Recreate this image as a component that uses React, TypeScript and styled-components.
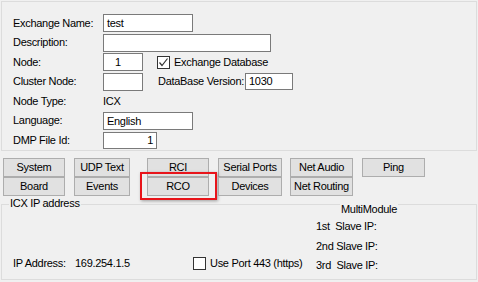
import React from 'react';
import styled, { createGlobalStyle } from 'styled-components';

const GlobalStyle = createGlobalStyle`
  html, body {
    margin: 0;
    padding: 0;
    background: #f0f0f0;
  }
  body {
    font-family: "Liberation Sans", Arial, sans-serif;
    font-size: 11px;
    letter-spacing: -0.3px;
    color: #000;
  }
`;

const Window = styled.div`
  width: 478px;
  height: 282px;
  box-sizing: border-box;
  padding: 1px 1px 0 1px;
  background: #f0f0f0;
  display: flex;
  flex-direction: column;
`;

const Panel = styled.div`
  border: 1px solid #dcdcdc;
  width: 476px;
  box-sizing: border-box;
  padding: 12px 0 1px 11px;
  display: grid;
  row-gap: 1.5px;
`;

const Row = styled.div`
  display: flex;
  align-items: center;
  height: 18px;
`;

const Label = styled.span<{ $w?: number }>`
  width: ${(p) => p.$w ?? 90}px;
  flex: none;
  line-height: 13px;
  white-space: nowrap;
`;

const Input = styled.div<{ $w: number; $right?: boolean; $h?: number; $pl?: number }>`
  width: ${(p) => p.$w}px;
  height: ${(p) => p.$h ?? 18}px;
  box-sizing: border-box;
  border: 1px solid #7a7a7a;
  background: #fff;
  padding: 0 3px 0 ${(p) => p.$pl ?? 3}px;
  line-height: ${(p) => (p.$h ?? 18) - 2}px;
  text-align: ${(p) => (p.$right ? 'right' : 'left')};
  flex: none;
`;

const CheckWrap = styled.label<{ $ml: number }>`
  display: flex;
  align-items: center;
  gap: 4px;
  margin-left: ${(p) => p.$ml}px;
  line-height: 13px;
  white-space: nowrap;
`;

const Box = styled.span`
  width: 13px;
  height: 13px;
  box-sizing: border-box;
  border: 1px solid #333;
  background: #fff;
  display: inline-flex;
  align-items: center;
  justify-content: center;
  flex: none;
`;

const Spaced = styled.span<{ $ml: number }>`
  margin-left: ${(p) => p.$ml}px;
  margin-right: 1px;
  line-height: 13px;
  white-space: nowrap;
`;

const Buttons = styled.div`
  display: grid;
  grid-template-columns: 71px 73px 71px 72px 72px 63px;
  grid-auto-rows: 19px;
  margin: 7px 0 0 2px;
`;

const Cell = styled.div<{ $marked?: boolean }>`
  position: relative;
  ${(p) =>
    p.$marked &&
    `
    &::after {
      content: '';
      position: absolute;
      left: -7px;
      top: -5px;
      right: 1px;
      bottom: -4px;
      border: 2px solid #e8141a;
      box-shadow: 1px 1px 3px rgba(0, 0, 0, 0.35);
      pointer-events: none;
    }
  `}
`;

const Button = styled.button<{ $w: number }>`
  width: ${(p) => p.$w}px;
  height: 19px;
  box-sizing: border-box;
  border: 1px solid #adadad;
  background: #e1e1e1;
  font: inherit;
  letter-spacing: inherit;
  color: #000;
  padding: 0;
  line-height: 17px;
  text-align: center;
`;

const Group = styled.div`
  position: relative;
  margin-top: 8px;
  width: 476px;
  height: 76px;
  box-sizing: border-box;
  border: 1px solid #dcdcdc;
  display: flex;
`;

const Legend = styled.span<{ $left: number; $top: number }>`
  position: absolute;
  left: ${(p) => p.$left}px;
  top: ${(p) => p.$top}px;
  background: #f0f0f0;
  line-height: 13px;
  padding: 0 1px;
  white-space: nowrap;
`;

const IpPart = styled.div`
  width: 314px;
  flex: none;
  box-sizing: border-box;
  padding: 0 0 9px 11px;
  align-self: flex-end;
  display: flex;
  align-items: center;
  line-height: 13px;
`;

const SlaveList = styled.div`
  display: flex;
  flex-direction: column;
  gap: 6.5px;
  padding-top: 15px;
  line-height: 13px;
  white-space: pre;
`;

const Check = () => (
  <svg width="11" height="11" viewBox="0 0 11 11">
    <polyline points="1.5,5.5 4,8.5 9.5,1.5" fill="none" stroke="#333" strokeWidth="1.2" />
  </svg>
);

const rowOne = [
  { t: 'System', w: 62 },
  { t: 'UDP Text', w: 56 },
  { t: 'RCI', w: 62 },
  { t: 'Serial Ports', w: 64 },
  { t: 'Net Audio', w: 63 },
  { t: 'Ping', w: 63 },
];

const rowTwo = [
  { t: 'Board', w: 62 },
  { t: 'Events', w: 56 },
  { t: 'RCO', w: 62, marked: true },
  { t: 'Devices', w: 64 },
  { t: 'Net Routing', w: 63 },
];

export default function App() {
  return (
    <>
      <GlobalStyle />
      <Window>
        <Panel>
          <Row>
            <Label>Exchange Name:</Label>
            <Input $w={90}>test</Input>
          </Row>
          <Row>
            <Label>Description:</Label>
            <Input $w={168} />
          </Row>
          <Row>
            <Label>Node:</Label>
            <Input $w={40} $pl={11}>1</Input>
            <CheckWrap $ml={14}>
              <Box>
                <Check />
              </Box>
              Exchange Database
            </CheckWrap>
          </Row>
          <Row>
            <Label>Cluster Node:</Label>
            <Input $w={40} />
            <Spaced $ml={15}>DataBase Version:</Spaced>
            <Input $w={48} $h={17}>1030</Input>
          </Row>
          <Row>
            <Label>Node Type:</Label>
            <span>ICX</span>
          </Row>
          <Row>
            <Label>Language:</Label>
            <Input $w={90}>English</Input>
          </Row>
          <Row>
            <Label>DMP File Id:</Label>
            <Input $w={54} $right $h={17}>1</Input>
          </Row>
        </Panel>

        <Buttons>
          {rowOne.map((b) => (
            <Cell key={b.t}>
              <Button $w={b.w}>{b.t}</Button>
            </Cell>
          ))}
          {rowTwo.map((b) => (
            <Cell key={b.t} $marked={b.marked}>
              <Button $w={b.w}>{b.t}</Button>
            </Cell>
          ))}
        </Buttons>

        <Group>
          <Legend $left={7} $top={-8}>ICX IP address</Legend>
          <Legend $left={338} $top={-2}>MultiModule</Legend>
          <IpPart>
            <Label $w={62}>IP Address:</Label>
            <Label $w={118}>169.254.1.5</Label>
            <CheckWrap $ml={0}>
              <Box />
              Use Port 443 (https)
            </CheckWrap>
          </IpPart>
          <SlaveList>
            <span>1st  Slave IP:</span>
            <span>2nd Slave IP:</span>
            <span>3rd  Slave IP:</span>
          </SlaveList>
        </Group>
      </Window>
    </>
  );
}
